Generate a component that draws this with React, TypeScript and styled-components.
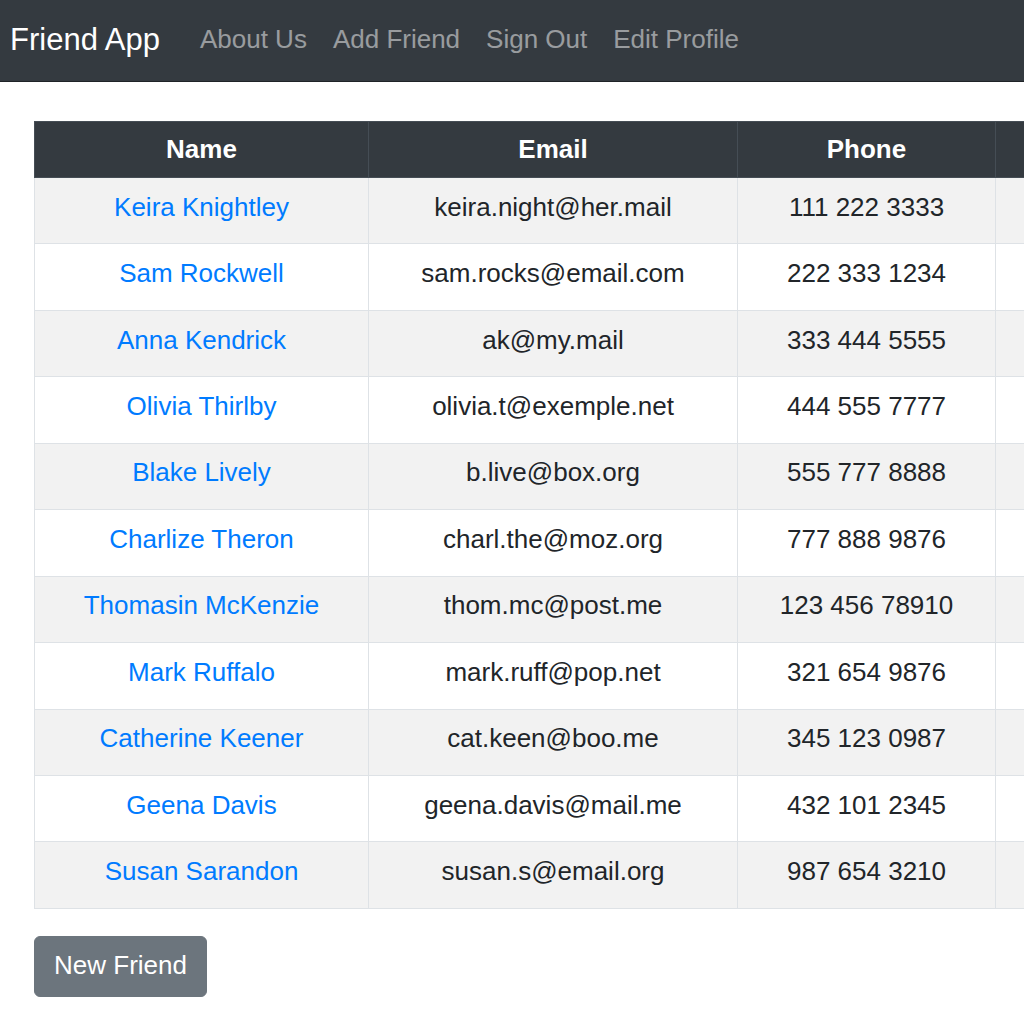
import React from "react";
import styled, { createGlobalStyle } from "styled-components";

const GlobalStyle = createGlobalStyle`
  html, body { margin: 0; padding: 0; background: #ffffff; overflow: hidden; }
  body { font-family: "Liberation Sans", Arial, sans-serif; color: #212529; width: 1024px; height: 1024px; }
`;

const NavBar = styled.nav`
  height: 81px;
  background: #343a40;
  border-bottom: 1px solid #1f2327;
  display: flex;
  align-items: center;
  padding: 0 10px;
  box-sizing: content-box;
`;

const Brand = styled.a`
  font-size: 31px;
  color: #ffffff;
  margin-right: 27px;
  text-decoration: none;
  line-height: 1;
  padding-bottom: 3px;
`;

const NavLinks = styled.div`
  display: flex;
  gap: 0;
`;

const NavLink = styled.a`
  font-size: 26px;
  color: rgba(255, 255, 255, 0.5);
  text-decoration: none;
  padding: 0 13px;
  line-height: 1;
  padding-bottom: 3px;
`;

const Main = styled.main`
  padding: 39px 0 0 34px;
`;

const Table = styled.table`
  border-collapse: collapse;
  table-layout: fixed;
  width: 1261px;
  font-size: 26px;
`;

const HeadCell = styled.th`
  background: #343a40;
  color: #ffffff;
  font-weight: 700;
  border: 1px solid #454d55;
  height: 55px;
  padding: 0 8px;
  text-align: center;
`;

const Row = styled.tr<{ $striped: boolean }>`
  background: ${(p) => (p.$striped ? "#f2f2f2" : "#ffffff")};
  height: 66.45px;
`;

const Cell = styled.td`
  border: 1px solid #dee2e6;
  text-align: center;
  padding: 0 8px 7px;
  color: #212529;
  white-space: nowrap;
`;

const NameLink = styled.a`
  color: #007bff;
  text-decoration: none;
`;

const Button = styled.button`
  margin-top: 27px;
  width: 173px;
  height: 61px;
  background: #6c757d;
  color: #ffffff;
  border: 1px solid #6c757d;
  border-radius: 6px;
  font-family: "Liberation Sans", Arial, sans-serif;
  font-size: 26px;
  padding: 0 0 2px;
  cursor: pointer;
`;

const friends = [
  ["Keira Knightley", "keira.night@her.mail", "111 222 3333"],
  ["Sam Rockwell", "sam.rocks@email.com", "222 333 1234"],
  ["Anna Kendrick", "ak@my.mail", "333 444 5555"],
  ["Olivia Thirlby", "olivia.t@exemple.net", "444 555 7777"],
  ["Blake Lively", "b.live@box.org", "555 777 8888"],
  ["Charlize Theron", "charl.the@moz.org", "777 888 9876"],
  ["Thomasin McKenzie", "thom.mc@post.me", "123 456 78910"],
  ["Mark Ruffalo", "mark.ruff@pop.net", "321 654 9876"],
  ["Catherine Keener", "cat.keen@boo.me", "345 123 0987"],
  ["Geena Davis", "geena.davis@mail.me", "432 101 2345"],
  ["Susan Sarandon", "susan.s@email.org", "987 654 3210"],
];

export default function App() {
  return (
    <>
      <GlobalStyle />
      <NavBar>
        <Brand href="#">Friend App</Brand>
        <NavLinks>
          <NavLink href="#">About Us</NavLink>
          <NavLink href="#">Add Friend</NavLink>
          <NavLink href="#">Sign Out</NavLink>
          <NavLink href="#">Edit Profile</NavLink>
        </NavLinks>
      </NavBar>
      <Main>
        <Table>
          <colgroup>
            <col style={{ width: 334 }} />
            <col style={{ width: 369 }} />
            <col style={{ width: 258 }} />
            <col style={{ width: 300 }} />
          </colgroup>
          <thead>
            <tr>
              <HeadCell>Name</HeadCell>
              <HeadCell>Email</HeadCell>
              <HeadCell>Phone</HeadCell>
              <HeadCell></HeadCell>
            </tr>
          </thead>
          <tbody>
            {friends.map(([name, email, phone], i) => (
              <Row key={name} $striped={i % 2 === 0}>
                <Cell>
                  <NameLink href="#">{name}</NameLink>
                </Cell>
                <Cell>{email}</Cell>
                <Cell>{phone}</Cell>
                <Cell></Cell>
              </Row>
            ))}
          </tbody>
        </Table>
        <Button>New Friend</Button>
      </Main>
    </>
  );
}
